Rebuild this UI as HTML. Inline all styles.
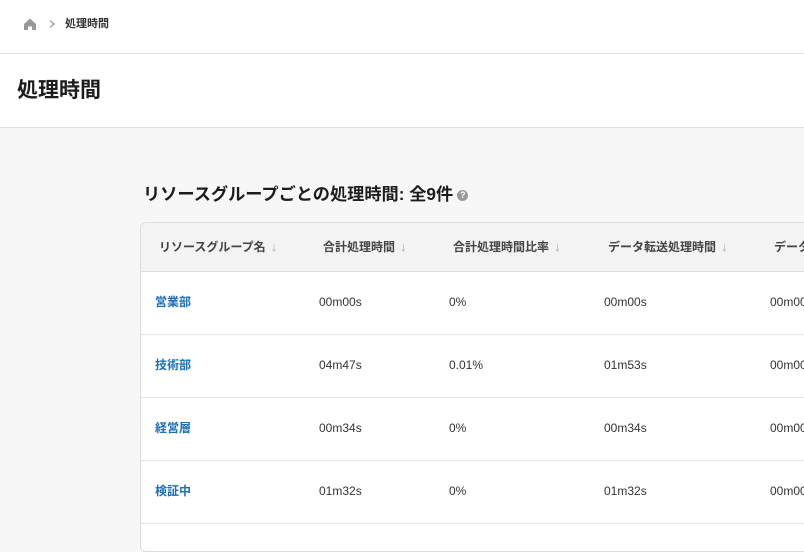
<!DOCTYPE html>
<html><head><meta charset="utf-8"><style>
*{margin:0;padding:0;box-sizing:border-box}
body{width:804px;height:539px;overflow:hidden;background:#f7f7f7;font-family:"Liberation Sans","Noto Sans CJK JP",sans-serif;color:#1a1a1a;position:relative}
.top{position:absolute;left:0;top:0;width:804px;height:54px;background:#fff;border-bottom:1px solid #e2e2e2}
.crumb{position:absolute;left:23px;top:16px;display:flex;align-items:center;font-size:11px;color:#333;font-weight:bold;line-height:16px}
.ttl{position:absolute;left:0;top:54px;width:804px;height:74px;background:#fff;border-bottom:1px solid #e0e0e0}
.ttl h1{position:absolute;left:17px;top:22px;font-size:21px;line-height:30px;font-weight:bold;color:#1c1c1c}
h2{position:absolute;left:143px;top:181px;font-size:17.2px;line-height:26px;font-weight:bold;color:#1c1c1c;white-space:nowrap}
.q{display:inline-block;width:11px;height:11px;border-radius:50%;background:#999;color:#fff;font-size:9px;text-align:center;line-height:11px;vertical-align:2px;margin-left:4px}
.tbl{position:absolute;left:140px;top:222px;width:700px;height:330px;background:#fff;border:1px solid #ddd;border-radius:6px;overflow:hidden}
.hd{height:49px;background:#f3f3f3;border-bottom:1px solid #ddd;position:relative}
.row{height:63px;border-bottom:1px solid #e3e3e3;position:relative}
.c{position:absolute;white-space:nowrap;font-size:12px;line-height:16px}
.hd .c{top:16px;font-weight:bold;color:#444}
.hd .c span{color:#aaa;font-weight:normal;margin-left:5px;font-size:13px}
.row .c{top:22px;color:#333}
.row .c.n{color:#1a6fb5;font-weight:bold}
</style></head><body>
<div class="top"><div class="crumb">
<svg width="14" height="14" viewBox="0 0 14 14"><path d="M1 7 L7 1.5 L13 7 V13 H9 V9.5 H5 V13 H1 Z" fill="#999"/></svg>
<svg width="8" height="10" viewBox="0 0 8 10" style="margin:0 9px 0 11px"><path d="M2 1.5 L6 5 L2 8.5" fill="none" stroke="#999" stroke-width="1.2"/></svg>処理時間</div></div>
<div class="ttl"><h1>処理時間</h1></div>
<h2>リソースグループごとの処理時間: 全9件<span class="q">?</span></h2>
<div class="tbl">
<div class="hd"><div class="c" style="left:18px">リソースグループ名<span>↓</span></div><div class="c" style="left:182px">合計処理時間<span>↓</span></div><div class="c" style="left:312px">合計処理時間比率<span>↓</span></div><div class="c" style="left:467px">データ転送処理時間<span>↓</span></div><div class="c" style="left:633px">データ転送</div></div>
<div class="row"><div class="c n" style="left:14px">営業部</div><div class="c" style="left:178px">00m00s</div><div class="c" style="left:308px">0%</div><div class="c" style="left:463px">00m00s</div><div class="c" style="left:629px">00m00s</div></div>
<div class="row"><div class="c n" style="left:14px">技術部</div><div class="c" style="left:178px">04m47s</div><div class="c" style="left:308px">0.01%</div><div class="c" style="left:463px">01m53s</div><div class="c" style="left:629px">00m00s</div></div>
<div class="row"><div class="c n" style="left:14px">経営層</div><div class="c" style="left:178px">00m34s</div><div class="c" style="left:308px">0%</div><div class="c" style="left:463px">00m34s</div><div class="c" style="left:629px">00m00s</div></div>
<div class="row"><div class="c n" style="left:14px">検証中</div><div class="c" style="left:178px">01m32s</div><div class="c" style="left:308px">0%</div><div class="c" style="left:463px">01m32s</div><div class="c" style="left:629px">00m00s</div></div>
</div>
</body></html>
